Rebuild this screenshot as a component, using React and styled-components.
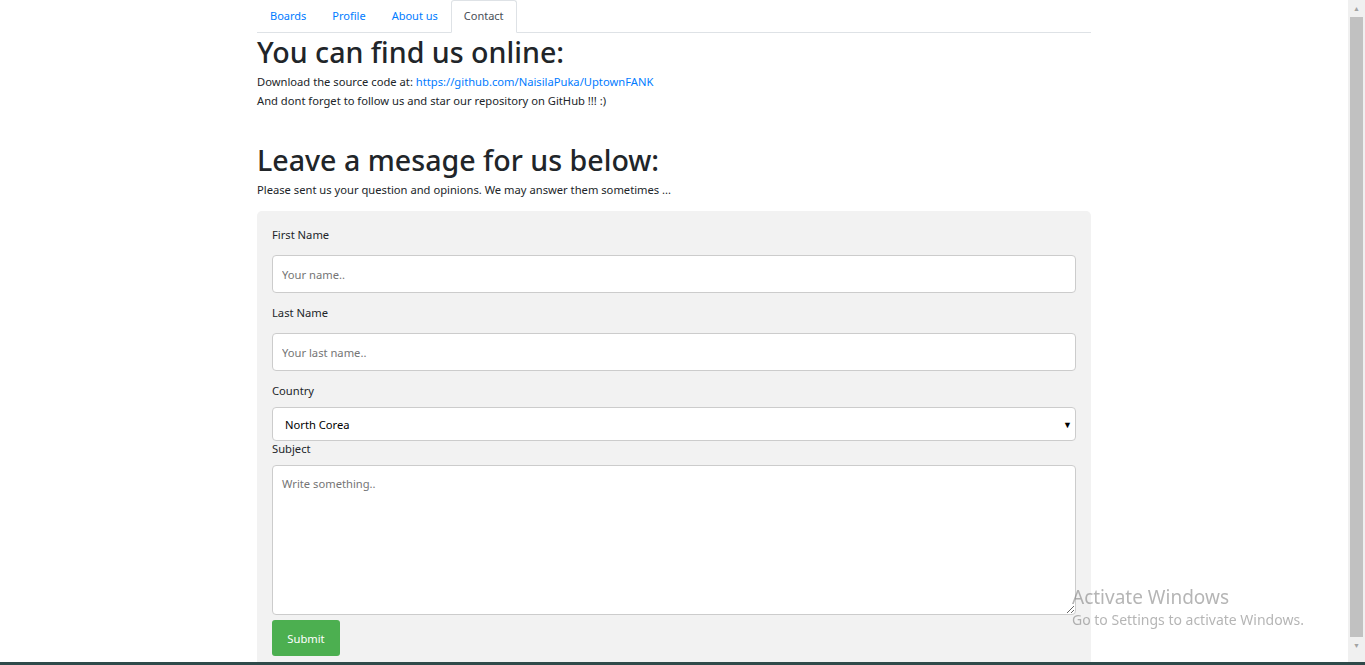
import styled, { createGlobalStyle } from "styled-components";

const GlobalStyle = createGlobalStyle`
  html, body {
    margin: 0;
    padding: 0;
    background: #fff;
    font-family: "Noto Sans", "Open Sans", sans-serif;
    color: #212529;
  }
`;

const Screen = styled.div`
  display: flex;
  height: 100vh;
  overflow: hidden;
`;

const Main = styled.div`
  flex: 1;
  overflow: hidden;
`;

const ScrollBar = styled.div`
  width: 17px;
  display: flex;
  flex-direction: column;
  align-items: center;
  background: #f0f0f0;
`;

const Arrow = styled.div`
  height: 17px;
  display: flex;
  align-items: center;
  justify-content: center;
  font-size: 7px;
  color: #a3a3a3;
`;

const Thumb = styled.div`
  width: 13px;
  height: 620px;
  background: #c1c1c1;
`;

const Container = styled.div`
  width: 834px;
  margin: 0 auto;
  padding-bottom: 40px;
`;

const Tabs = styled.ul`
  display: flex;
  list-style: none;
  margin: 0;
  padding: 0;
  border-bottom: 1px solid #dee2e6;
`;

const Tab = styled.li`
  margin-bottom: -1px;
`;

const TabLink = styled.a`
  display: block;
  padding: 7px 12px 8px;
  font-size: 11px;
  line-height: 16px;
  text-decoration: none;
  color: ${(props) => (props.active ? "#495057" : "#007bff")};
  background: ${(props) => (props.active ? "#fff" : "transparent")};
  border: 1px solid ${(props) => (props.active ? "#dee2e6" : "transparent")};
  border-bottom-color: ${(props) => (props.active ? "#fff" : "transparent")};
  border-radius: 3px 3px 0 0;
`;

const Title = styled.h1`
  font-size: 28.6px;
  font-weight: 500;
  line-height: 36px;
  margin: ${(props) => (props.second ? "32px 0 2px" : "1px 0 2px")};
`;

const Text = styled.p`
  margin: 0;
  font-size: 11.2px;
  line-height: 19px;
`;

const Link = styled.a`
  color: #007bff;
  text-decoration: none;
`;

const FormBox = styled.div`
  margin-top: 12px;
  background: #f2f2f2;
  border-radius: 5px;
  padding: 16px 15px 20px;
`;

const Label = styled.label`
  display: block;
  font-size: 11.2px;
  line-height: 16px;
`;

const Input = styled.input`
  box-sizing: border-box;
  display: block;
  width: 100%;
  height: 38px;
  margin: 12px 0 12px;
  padding: 0 9px;
  border: 1px solid #ccc;
  border-radius: 4px;
  background: #fff;
  font-family: inherit;
  font-size: 11.2px;
  &::placeholder {
    color: #757575;
  }
`;

const SelectBox = styled.div`
  position: relative;
  margin: 8px 0 0;
`;

const Select = styled.select`
  box-sizing: border-box;
  display: block;
  width: 100%;
  height: 34px;
  padding: 0 12px;
  border: 1px solid #ccc;
  border-radius: 4px;
  background: #fff;
  font-family: inherit;
  font-size: 11.2px;
  color: #000;
  appearance: none;
`;

const Caret = styled.span`
  position: absolute;
  right: 4px;
  top: 11px;
  font-size: 9px;
  color: #000;
  pointer-events: none;
`;

const TextArea = styled.textarea`
  box-sizing: border-box;
  display: block;
  width: 100%;
  height: 150px;
  margin: 8px 0 5px;
  padding: 10px 9px;
  border: 1px solid #ccc;
  border-radius: 4px;
  background: #fff;
  font-family: inherit;
  font-size: 11.2px;
  resize: vertical;
  &::placeholder {
    color: #757575;
  }
`;

const Submit = styled.button`
  width: 68px;
  height: 36px;
  border: none;
  border-radius: 3px;
  background: #4caf50;
  color: #fff;
  font-family: inherit;
  font-size: 11.2px;
  cursor: pointer;
`;

const Watermark = styled.div`
  position: fixed;
  left: 1072px;
  top: 585px;
  color: rgba(120, 120, 120, 0.55);
  font-family: "Noto Sans", sans-serif;
  pointer-events: none;
`;

const WatermarkTitle = styled.div`
  font-size: 19px;
  line-height: 24px;
`;

const WatermarkSub = styled.div`
  font-size: 14px;
  line-height: 22px;
`;

const Taskbar = styled.div`
  position: fixed;
  left: 0;
  right: 0;
  bottom: 0;
  height: 3px;
  background: #2f4a4a;
`;

const App = () => {
  const tabs = ["Boards", "Profile", "About us", "Contact"];
  return (
    <>
      <GlobalStyle />
      <Screen>
        <Main>
          <Container>
            <Tabs>
              {tabs.map((t) => (
                <Tab key={t}>
                  <TabLink href="#" active={t === "Contact" ? 1 : 0}>
                    {t}
                  </TabLink>
                </Tab>
              ))}
            </Tabs>
            <Title>You can find us online:</Title>
            <Text>
              Download the source code at:{" "}
              <Link href="#">https://github.com/NaisilaPuka/UptownFANK</Link>
            </Text>
            <Text>And dont forget to follow us and star our repository on GitHub !!! :)</Text>
            <Title second>Leave a mesage for us below:</Title>
            <Text>Please sent us your question and opinions. We may answer them sometimes ...</Text>
            <FormBox>
              <Label>First Name</Label>
              <Input placeholder="Your name.." />
              <Label>Last Name</Label>
              <Input placeholder="Your last name.." />
              <Label>Country</Label>
              <SelectBox>
                <Select defaultValue="nk">
                  <option value="nk">North Corea</option>
                  <option value="sk">South Corea</option>
                </Select>
                <Caret>▼</Caret>
              </SelectBox>
              <Label>Subject</Label>
              <TextArea placeholder="Write something.." />
              <Submit>Submit</Submit>
            </FormBox>
          </Container>
        </Main>
        <ScrollBar>
          <Arrow>▲</Arrow>
          <Thumb />
          <Arrow>▼</Arrow>
        </ScrollBar>
      </Screen>
      <Watermark>
        <WatermarkTitle>Activate Windows</WatermarkTitle>
        <WatermarkSub>Go to Settings to activate Windows.</WatermarkSub>
      </Watermark>
      <Taskbar />
    </>
  );
};

export default App;
